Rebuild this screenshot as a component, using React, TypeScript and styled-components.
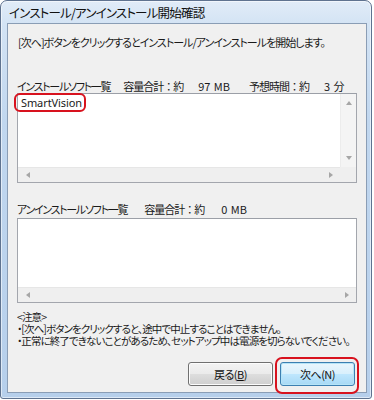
import React from "react";
import styled, { createGlobalStyle, css } from "styled-components";

const GlobalStyle = createGlobalStyle`
  html, body { margin: 0; padding: 0; background: #ffffff; }
  body {
    font-family: "Noto Sans CJK JP", "Noto Sans", sans-serif;
    color: #1a1a1a;
  }
  * { box-sizing: border-box; }
`;

const Window = styled.div`
  width: 372px;
  height: 399px;
  border: 1px solid #5f7390;
  border-radius: 7px 7px 3px 3px;
  background: linear-gradient(180deg, #e1ecf8 0px, #d3e3f4 24px, #c1d7ef 120px, #b6cfeb 100%);
  display: flex;
  flex-direction: column;
  padding: 0 4px 5px 6px;
  box-shadow: inset 0 0 0 1px rgba(255, 255, 255, 0.55);
`;

const Title = styled.div`
  height: 22px;
  line-height: 24px;
  padding-left: 2px;
  font-size: 12.5px;
  font-feature-settings: "palt";
  letter-spacing: -0.8px;
  color: #111;
  white-space: nowrap;
`;

const Panel = styled.div`
  flex: 1;
  border: 1px solid #8a9db5;
  background: #f0f0f0;
  display: flex;
  flex-direction: column;
  padding: 0 9px;
`;

const Text = styled.div<{ $top: number; $indent?: number }>`
  margin-top: ${(p) => p.$top}px;
  padding-left: ${(p) => p.$indent ?? 0}px;
  font-size: 11px;
  line-height: 14px;
  height: 14px;
  font-feature-settings: "palt";
  letter-spacing: -1px;
  white-space: nowrap;
  display: flex;
`;

const Name = styled.span`
  letter-spacing: -1.3px;
`;

const Field = styled.span<{ $gap: number }>`
  margin-left: ${(p) => p.$gap}px;
  font-feature-settings: normal;
`;

const Value = styled.span<{ $gap: number }>`
  margin-left: ${(p) => p.$gap}px;
  letter-spacing: 0;
  word-spacing: 1px;
`;

const ListBox = styled.div<{ $top: number; $height: number }>`
  margin-top: ${(p) => p.$top}px;
  height: ${(p) => p.$height}px;
  width: 340px;
  border: 1px solid #a3a6ad;
  border-top-color: #9b9fa7;
  background: #ffffff;
  display: grid;
`;

const ListArea = styled.div<{ $vscroll: boolean }>`
  display: grid;
  grid-template-columns: ${(p) => (p.$vscroll ? "1fr 16px" : "1fr")};
  grid-template-rows: 1fr 15px;
  height: 100%;
`;

const Items = styled.div`
  padding: 2px 0 0 3px;
  font-size: 11px;
  line-height: 14px;
  font-family: "Noto Sans", "Liberation Sans", sans-serif;
  letter-spacing: -0.1px;
`;

const Item = styled.span`
  position: relative;
  display: inline-block;
  &::after {
    content: "";
    position: absolute;
    left: -7px;
    right: -4px;
    top: -3px;
    bottom: -2px;
    border: 2px solid #d8121e;
    border-radius: 6px;
  }
`;

const VScroll = styled.div`
  background: #f4f4f4;
  border-left: 1px solid #ececec;
  display: flex;
  flex-direction: column;
  justify-content: space-between;
  align-items: center;
  padding: 7px 0 7px;
`;

const HScroll = styled.div<{ $span: boolean }>`
  grid-column: ${(p) => (p.$span ? "1 / -1" : "1 / 2")};
  background: #efefef;
  border-top: 1px solid #e6e6e6;
  display: flex;
  justify-content: space-between;
  align-items: center;
  padding: 0 7px 0 8px;
`;

const Corner = styled.div`
  background: #efefef;
`;

const arrowBase = css`
  width: 0;
  height: 0;
  border-style: solid;
`;

const Arrow = styled.span<{ $dir: "up" | "down" | "left" | "right" }>`
  ${arrowBase}
  ${(p) =>
    p.$dir === "up"
      ? css`border-width: 0 3.5px 4px 3.5px; border-color: transparent transparent #a6a6a6 transparent;`
      : p.$dir === "down"
      ? css`border-width: 4px 3.5px 0 3.5px; border-color: #a6a6a6 transparent transparent transparent;`
      : p.$dir === "left"
      ? css`border-width: 3.5px 4px 3.5px 0; border-color: transparent #a6a6a6 transparent transparent;`
      : css`border-width: 3.5px 0 3.5px 4px; border-color: transparent transparent transparent #a6a6a6;`}
`;

const Notes = styled.div`
  margin-top: 8px;
  font-size: 10.5px;
  line-height: 12px;
  font-feature-settings: "palt";
  letter-spacing: -0.9px;
  white-space: nowrap;
`;

const ButtonRow = styled.div`
  margin-top: 15px;
  display: flex;
  justify-content: flex-end;
  gap: 7px;
  padding-right: 2px;
`;

const Button = styled.button<{ $w: number; $default?: boolean }>`
  width: ${(p) => p.$w}px;
  height: 24px;
  border: 1px solid #707070;
  border-radius: 3px;
  background: linear-gradient(180deg, #f3f3f3 0%, #ebebeb 48%, #dddddd 52%, #cfcfcf 100%);
  box-shadow: inset 0 0 0 1px #fcfcfc;
  font-family: "Noto Sans CJK JP", "Noto Sans", sans-serif;
  font-size: 11px;
  font-feature-settings: "palt";
  letter-spacing: -0.5px;
  color: #111;
  padding: 0;
  position: relative;
  ${(p) =>
    p.$default &&
    css`
      border-color: #3c7fb1;
      background: linear-gradient(180deg, #eaf6fd 0%, #d9f0fc 48%, #bee6fd 52%, #a7d9f5 100%);
      box-shadow: inset 0 0 0 1px #b6e4f7;
      &::after {
        content: "";
        position: absolute;
        left: -6px;
        right: -5px;
        top: -6px;
        bottom: -9px;
        border: 2.5px solid #d8121e;
        border-radius: 7px;
      }
    `}
  u { text-decoration: underline; text-underline-offset: 1px; }
`;

export default function App() {
  return (
    <>
      <GlobalStyle />
      <Window>
        <Title>インストール/アンインストール開始確認</Title>
        <Panel>
          <Text $top={11} $indent={1}>[次へ]ボタンをクリックするとインストール/アンインストールを開始します。</Text>
          <Text $top={30}>
            <Name>インストールソフト一覧</Name>
            <Field $gap={13}>容量合計：約</Field>
            <Value $gap={15}>97 MB</Value>
            <Field $gap={19}>予想時間：約</Field>
            <Value $gap={15}>3 分</Value>
          </Text>
          <ListBox $top={0} $height={90}>
            <ListArea $vscroll>
              <Items>
                <Item>SmartVision</Item>
              </Items>
              <VScroll>
                <Arrow $dir="up" />
                <Arrow $dir="down" />
              </VScroll>
              <HScroll $span={false}>
                <Arrow $dir="left" />
                <Arrow $dir="right" />
              </HScroll>
              <Corner />
            </ListArea>
          </ListBox>
          <Text $top={19}>
            <Name>アンインストールソフト一覧</Name>
            <Field $gap={17}>容量合計：約</Field>
            <Value $gap={17}>0 MB</Value>
          </Text>
          <ListBox $top={2} $height={85}>
            <ListArea $vscroll={false}>
              <Items />
              <HScroll $span>
                <Arrow $dir="left" />
                <Arrow $dir="right" />
              </HScroll>
            </ListArea>
          </ListBox>
          <Notes>
            <div>&lt;注意&gt;</div>
            <div>・[次へ]ボタンをクリックすると、途中で中止することはできません。</div>
            <div>・正常に終了できないことがあるため、セットアップ中は電源を切らないでください。</div>
          </Notes>
          <ButtonRow>
            <Button $w={85}>戻る(<u>B</u>)</Button>
            <Button $w={75} $default>次へ(N)</Button>
          </ButtonRow>
        </Panel>
      </Window>
    </>
  );
}
